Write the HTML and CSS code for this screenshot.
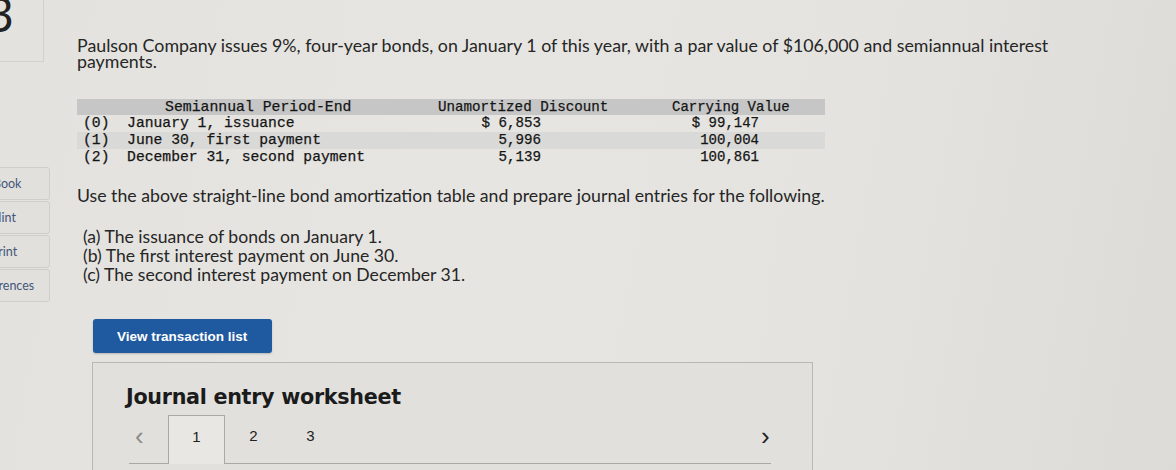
FILE: index.html
```html
<!DOCTYPE html>
<html>
<head>
<meta charset="utf-8">
<link rel="stylesheet" href="styles.css">
</head>
<body>
<div class="page">
  <aside class="sidebar">
    <div class="qnum">3</div>
    <nav class="tools">
      <div class="tool">eBook</div>
      <div class="tool">Hint</div>
      <div class="tool">Print</div>
      <div class="tool">References</div>
    </nav>
  </aside>
  <main class="main">
    <p class="intro">Paulson Company issues 9%, four-year bonds, on January 1 of this year, with a par value of $106,000 and semiannual interest payments.</p>
    <div class="table">
      <div class="row head">
        <div class="c1 hc1">Semiannual Period-End</div>
        <div class="c2 hc2">Unamortized Discount</div>
        <div class="c3 hc3">Carrying Value</div>
      </div>
      <div class="row">
        <div class="c1">(0)&nbsp;&nbsp;January 1, issuance</div>
        <div class="c2 num">$ 6,853</div>
        <div class="c3 num">$ 99,147</div>
      </div>
      <div class="row band">
        <div class="c1">(1)&nbsp;&nbsp;June 30, first payment</div>
        <div class="c2 num">5,996</div>
        <div class="c3 num">100,004</div>
      </div>
      <div class="row">
        <div class="c1">(2)&nbsp;&nbsp;December 31, second payment</div>
        <div class="c2 num">5,139</div>
        <div class="c3 num">100,861</div>
      </div>
    </div>
    <p class="instr">Use the above straight-line bond amortization table and prepare journal entries for the following.</p>
    <ul class="tasks">
      <li>(a) The issuance of bonds on January 1.</li>
      <li>(b) The first interest payment on June 30.</li>
      <li>(c) The second interest payment on December 31.</li>
    </ul>
    <button class="btn">View transaction list</button>
    <section class="worksheet">
      <h2 class="ws-title">Journal entry worksheet</h2>
      <div class="tabs">
        <span class="arrow prev">&#x2039;</span>
        <span class="tab active">1</span>
        <span class="tab">2</span>
        <span class="tab">3</span>
        <span class="spacer"></span>
        <span class="arrow next">&#x203A;</span>
      </div>
    </section>
  </main>
</div>
</body>
</html>
```

FILE: styles.css
```css
html, body {
  margin: 0;
  padding: 0;
}
body {
  width: 1176px;
  height: 470px;
  overflow: hidden;
  background: linear-gradient(100deg, #e3e2de 0%, #e6e5e1 40%, #e4e3df 70%, #dcdbd7 100%);
  font-family: "Lato", "Open Sans", sans-serif;
  color: #262626;
}
.page {
  display: flex;
  height: 470px;
}
.sidebar {
  width: 52px;
  flex: none;
  overflow: hidden;
  display: flex;
  flex-direction: column;
}
.qnum {
  width: 44px;
  height: 62px;
  box-sizing: border-box;
  border-right: 1px solid #d2d1cd;
  border-bottom: 1px solid #d2d1cd;
  font-size: 48px;
  line-height: 28px;
  text-indent: -14px;
  color: #222;
  overflow: hidden;
}
.tools {
  margin-top: 105px;
  display: flex;
  flex-direction: column;
  gap: 1px;
  margin-left: -42px;
}
.tool {
  width: 92px;
  height: 33px;
  box-sizing: border-box;
  border: 1px solid #cfcecb;
  border-radius: 3px;
  background: #e1e0dc;
  text-align: center;
  font-size: 12.5px;
  line-height: 31px;
  color: #44557a;
}
.main {
  flex: 1;
  padding-left: 25px;
  padding-top: 37px;
}
.intro {
  margin: 0;
  width: 1000px;
  font-size: 17.8px;
  line-height: 16px;
  color: #262626;
}
.table {
  margin-top: 30px;
  width: 748px;
  font-family: "Liberation Mono", "Courier New", monospace;
  font-size: 14.7px;
  color: #151515;
  -webkit-text-stroke: 0.25px #151515;
}
.row {
  display: flex;
  height: 17px;
  line-height: 17px;
  white-space: pre;
}
.row.head {
  height: 16px;
  line-height: 16px;
  background: #c6c6c6;
  font-size: 14.8px;
}
.row.band {
  background: #d9d9d7;
}
.c1 { width: 360px; padding-left: 6px; box-sizing: border-box; }
.c2 { width: 183px; box-sizing: border-box; }
.c3 { width: 205px; box-sizing: border-box; }
.hc1 { padding-left: 88px; }
.hc2 { padding-left: 1px; font-size: 14.2px; }
.hc3 { padding-left: 52px; font-size: 14px; }
.c2.num { text-align: right; padding-right: 79px; font-size: 14.2px; }
.c3.num { text-align: right; padding-right: 66px; font-size: 14px; }
.instr {
  margin: 20px 0 0 0;
  font-size: 17.7px;
  line-height: 20px;
}
.tasks {
  list-style: none;
  margin: 21px 0 0 6px;
  padding: 0;
  font-size: 17.6px;
  line-height: 19px;
}
.btn {
  display: block;
  margin: 35px 0 0 16px;
  width: 179px;
  height: 34px;
  border: none;
  border-radius: 3px;
  background: #1f5aa0;
  color: #fff;
  font-family: "Liberation Sans", Arial, sans-serif;
  font-weight: 700;
  font-size: 13.5px;
  padding: 0 0 0 24px;
  text-align: left;
  box-shadow: 0 1px 2px rgba(0,0,0,0.2);
}
.worksheet {
  margin: 9px 0 0 15px;
  width: 721px;
  height: 120px;
  box-sizing: border-box;
  border: 1px solid #b9b8b5;
  border-bottom: none;
  background: #e1e0dc;
  padding: 22px 0 0 33px;
}
.ws-title {
  margin: 0;
  font-family: "DejaVu Sans", Verdana, sans-serif;
  font-weight: 700;
  font-size: 20.7px;
  line-height: 24px;
  color: #1b1b1b;
  letter-spacing: -0.3px;
}
.tabs {
  margin-top: 16px;
  margin-left: 3px;
  width: 642px;
  height: 38px;
  display: flex;
  align-items: flex-start;
  border-bottom: 1px solid #a9a8a5;
  font-family: "Liberation Sans", Arial, sans-serif;
  font-size: 15px;
  color: #222;
}
.arrow {
  font-size: 26px;
  line-height: 22px;
}
.prev {
  color: #8a8a8a;
  width: 39px;
  padding-left: 6px;
  box-sizing: border-box;
}
.next {
  color: #222;
  width: 10px;
}
.tab {
  width: 57px;
  height: 39px;
  box-sizing: border-box;
  text-align: center;
  line-height: 22px;
}
.tab.active {
  border: 1px solid #a9a8a5;
  border-bottom: none;
  background: #e8e7e3;
  margin-top: -10px;
  padding-top: 10px;
  height: 49px;
}
.spacer { flex: 1; }
```
